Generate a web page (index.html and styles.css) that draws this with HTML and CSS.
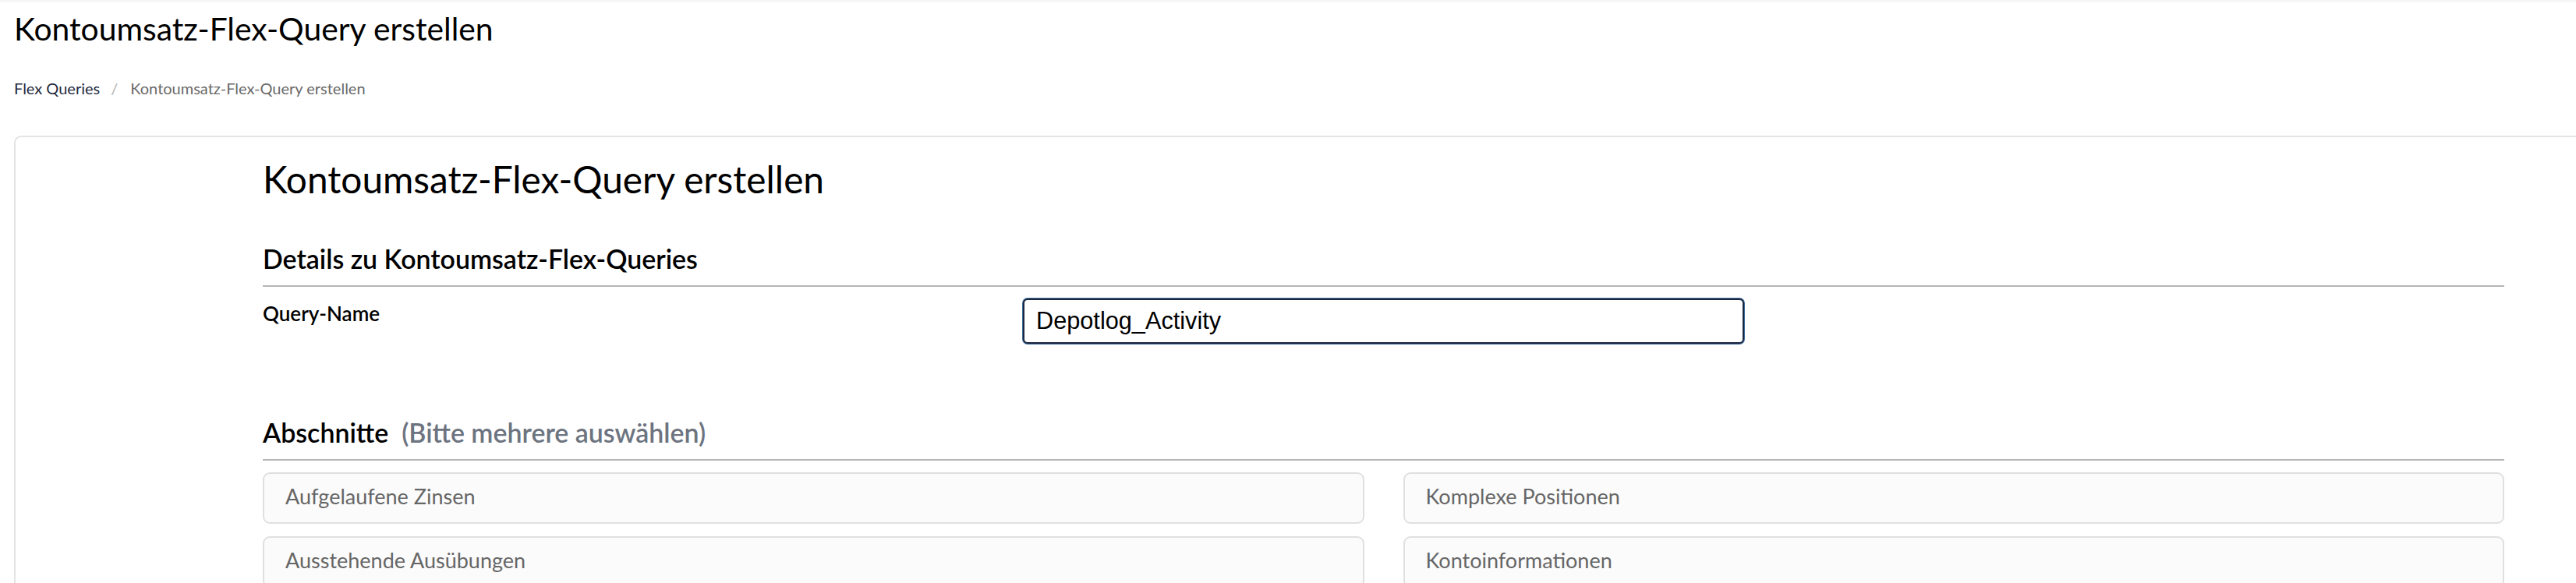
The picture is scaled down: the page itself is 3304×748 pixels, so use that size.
FILE: index.html
```html
<!DOCTYPE html>
<html lang="de">
<head>
<meta charset="utf-8">
<title>Kontoumsatz-Flex-Query erstellen</title>
<link rel="stylesheet" href="styles.css">
</head>
<body>
<div class="topbar"></div>
<header class="page-head">
  <h1 class="page-title">Kontoumsatz-Flex-Query erstellen</h1>
  <nav class="crumbs">
    <a class="crumb-link" href="#">Flex Queries</a>
    <span class="crumb-sep">/</span>
    <span class="crumb-current">Kontoumsatz-Flex-Query erstellen</span>
  </nav>
</header>

<main class="card">
  <div class="container">
    <h2 class="form-title">Kontoumsatz-Flex-Query erstellen</h2>

    <h3 class="section-head">Details zu Kontoumsatz-Flex-Queries</h3>
    <div class="field-row">
      <label class="field-label" for="qname">Query-Name</label>
      <input class="field-input" id="qname" type="text" value="Depotlog_Activity">
    </div>

    <h3 class="section-head section-gap">Abschnitte<span class="hint">(Bitte mehrere auswählen)</span></h3>
    <div class="sections">
      <div class="section-item">Aufgelaufene Zinsen</div>
      <div class="section-item">Komplexe Positionen</div>
      <div class="section-item">Ausstehende Ausübungen</div>
      <div class="section-item">Kontoinformationen</div>
    </div>
  </div>
</main>
</body>
</html>
```
FILE: styles.css
```css
html, body {
  margin: 0;
  padding: 0;
  overflow: hidden;
  background: #ffffff;
}

body {
  font-family: Lato, "Open Sans", sans-serif;
  color: #000000;
}

.topbar {
  height: 0;
  box-shadow: 0 0 4px 1px rgba(0, 0, 0, 0.12);
}

.page-head {
  padding: 15px 0 0 18px;
}

.page-title {
  margin: 0;
  font-size: 40.8px;
  line-height: 44px;
  font-weight: 400;
  color: #000;
}

.crumbs {
  margin-top: 42px;
  display: flex;
  align-items: baseline;
  font-size: 20px;
  line-height: 24px;
}

.crumb-link {
  color: #262b40;
  text-decoration: none;
}

.crumb-sep {
  color: #b0b0b0;
  margin: 0 16px 0 14px;
}

.crumb-current {
  color: #6a6a6a;
}

.card {
  display: block;
  margin: 49px 0 0 18px;
  width: 3513px;
  box-sizing: border-box;
  border: 2px solid #e4e4e4;
  border-radius: 9px;
  padding: 29px 317px 0;
  min-height: 700px;
}

.container {
  width: 2875px;
}

.form-title {
  margin: 0;
  font-size: 47.8px;
  line-height: 50px;
  font-weight: 400;
}

.section-head {
  margin: 60px 0 0;
  padding-bottom: 17px;
  border-bottom: 2px solid #b6b6b6;
  font-size: 33.9px;
  line-height: 34px;
  font-weight: 600;
}

.section-gap {
  margin-top: 97px;
}

.hint {
  color: #6d7480;
  margin-left: 17px;
}

.field-row {
  display: grid;
  grid-template-columns: 1fr 1fr 1fr;
  column-gap: 50px;
  align-items: start;
  margin-top: 15px;
}

.field-label {
  margin-top: 6px;
  font-size: 26px;
  line-height: 26px;
  font-weight: 600;
}

.field-input {
  box-sizing: border-box;
  width: 100%;
  height: 58px;
  margin: 0;
  padding: 0 15px;
  border: 2px solid #1b2740;
  border-radius: 6px;
  box-shadow: 0 0 0 1px #3f6c9c;
  outline: none;
  font-family: "Liberation Sans", Arial, sans-serif;
  font-size: 30.7px;
  color: #000;
  background: #fff;
}

.sections {
  display: grid;
  grid-template-columns: 1fr 1fr;
  column-gap: 50px;
  row-gap: 16px;
  margin-top: 15px;
}

.section-item {
  box-sizing: border-box;
  height: 66px;
  padding: 16px 27px 0;
  border: 2px solid #e0e0e0;
  border-radius: 9px;
  background: #fbfbfb;
  font-size: 27px;
  line-height: 26px;
  font-weight: 400;
  color: #666666;
}
```
